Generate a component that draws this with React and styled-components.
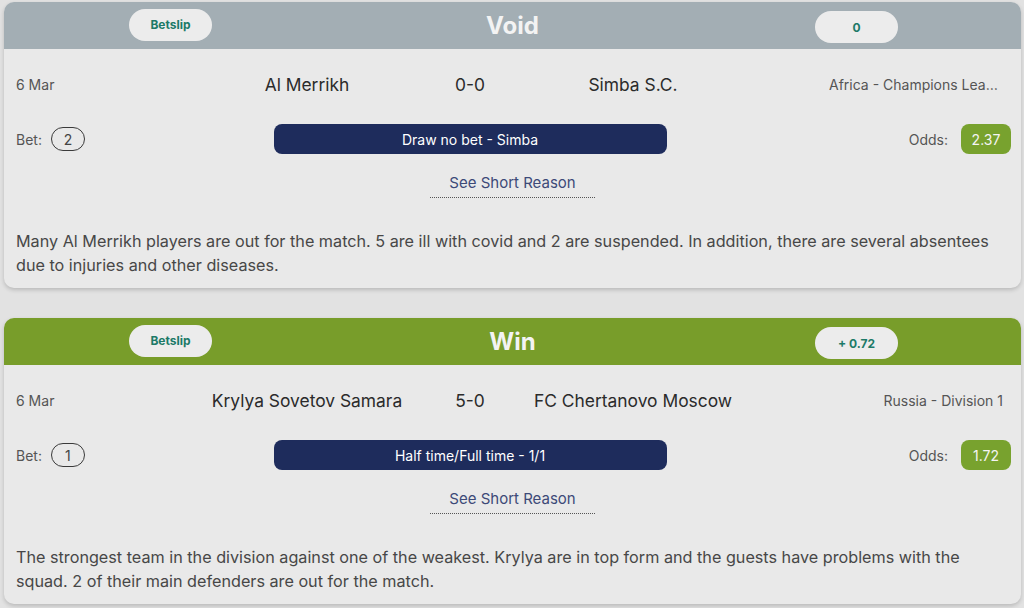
import React from "react";
import styled, { createGlobalStyle } from "styled-components";

const GlobalStyle = createGlobalStyle`
  * { box-sizing: border-box; }
  body {
    margin: 0;
    background: #e2e2e2;
    font-family: Inter, "Liberation Sans", sans-serif;
  }
`;

const Page = styled.div`
  display: flex;
  flex-direction: column;
  gap: 30px;
  padding: 2px 3px 4px 4px;
`;

const Card = styled.section`
  background: #e9e9e9;
  border-radius: 10px;
  overflow: hidden;
  box-shadow: 0 2px 4px rgba(0, 0, 0, 0.18);
`;

const Header = styled.header`
  height: 47px;
  background: ${(p) => (p.$win ? "#789d2a" : "#a3aeb4")};
  display: grid;
  grid-template-columns: 1fr 1fr 1fr;
  align-items: center;
  justify-items: center;
`;

const Pill = styled.span`
  width: 83px;
  height: 32px;
  border-radius: 16px;
  background: #ececec;
  color: #1c7a68;
  font-size: 12px;
  font-weight: 700;
  display: flex;
  align-items: center;
  justify-content: center;
  margin-top: ${(p) => (p.$right ? "3px" : "-2px")};
  transform: translateX(${(p) => (p.$right ? "5px" : "-3px")});
`;

const Title = styled.h2`
  margin: 0;
  color: #f3f3f3;
  font-size: 24px;
  font-weight: 700;
`;

const Body = styled.div`
  padding: 25px 12px 11px;
`;

const Grid = styled.div`
  display: grid;
  grid-template-columns: 178px 226px 100px 226px 1fr;
  align-items: center;
  margin-bottom: ${(p) => p.$mb || "0"};
`;

const Muted = styled.span`
  color: #555;
  font-size: 14px;
`;

const Team = styled.span`
  color: #2b2b2b;
  font-size: 17.4px;
  text-align: center;
  white-space: nowrap;
`;

const League = styled.span`
  justify-self: end;
  max-width: 174px;
  margin-right: 6px;
  color: #555;
  font-size: 14px;
  white-space: nowrap;
  overflow: hidden;
  text-overflow: ellipsis;
`;

const BetBox = styled.div`
  display: flex;
  align-items: center;
  gap: 9px;
`;

const BetCount = styled.span`
  width: 34px;
  height: 24px;
  border: 1.5px solid #3a3a3a;
  border-radius: 12px;
  display: flex;
  align-items: center;
  justify-content: center;
  color: #444;
  font-size: 14px;
`;

const Market = styled.div`
  grid-column: 2 / 5;
  justify-self: center;
  width: 393px;
  height: 30px;
  border-radius: 8px;
  background: #1e2c5c;
  color: #fff;
  font-size: 14px;
  display: flex;
  align-items: center;
  justify-content: center;
`;

const OddsBox = styled.div`
  justify-self: end;
  display: flex;
  align-items: center;
  gap: 13px;
  margin-right: -2px;
`;

const OddsValue = styled.span`
  width: 50px;
  height: 30px;
  border-radius: 8px;
  background: #78a22e;
  color: #f4f4f4;
  font-size: 14px;
  display: flex;
  align-items: center;
  justify-content: center;
`;

const LinkRow = styled.div`
  display: flex;
  justify-content: center;
  margin: 19px 0 31px;
`;

const ReasonLink = styled.a`
  padding: 0 19px 4px;
  border-bottom: 1px dotted #555;
  color: #3d4a78;
  font-size: 15px;
  line-height: 20px;
  text-decoration: none;
`;

const Reason = styled.p`
  margin: 0;
  padding-right: 17px;
  color: #474747;
  font-size: 16.2px;
  line-height: 24px;
`;

const bets = [
  {
    status: "Void",
    win: false,
    profit: "0",
    date: "6 Mar",
    home: "Al Merrikh",
    score: "0-0",
    away: "Simba S.C.",
    league: "Africa - Champions League",
    count: 2,
    market: "Draw no bet - Simba",
    odds: "2.37",
    reason:
      "Many Al Merrikh players are out for the match. 5 are ill with covid and 2 are suspended. In addition, there are several absentees due to injuries and other diseases.",
  },
  {
    status: "Win",
    win: true,
    profit: "+ 0.72",
    date: "6 Mar",
    home: "Krylya Sovetov Samara",
    score: "5-0",
    away: "FC Chertanovo Moscow",
    league: "Russia - Division 1",
    count: 1,
    market: "Half time/Full time - 1/1",
    odds: "1.72",
    reason:
      "The strongest team in the division against one of the weakest. Krylya are in top form and the guests have problems with the squad. 2 of their main defenders are out for the match.",
  },
];

const BetCard = ({ bet }) => (
  <Card>
    <Header $win={bet.win}>
      <Pill>Betslip</Pill>
      <Title>{bet.status}</Title>
      <Pill $right>{bet.profit}</Pill>
    </Header>
    <Body>
      <Grid $mb="29px">
        <Muted>{bet.date}</Muted>
        <Team>{bet.home}</Team>
        <Team>{bet.score}</Team>
        <Team>{bet.away}</Team>
        <League>{bet.league}</League>
      </Grid>
      <Grid>
        <BetBox>
          <Muted>Bet:</Muted>
          <BetCount>{bet.count}</BetCount>
        </BetBox>
        <Market>{bet.market}</Market>
        <OddsBox>
          <Muted>Odds:</Muted>
          <OddsValue>{bet.odds}</OddsValue>
        </OddsBox>
      </Grid>
      <LinkRow>
        <ReasonLink href="#">See Short Reason</ReasonLink>
      </LinkRow>
      <Reason>{bet.reason}</Reason>
    </Body>
  </Card>
);

export default function App() {
  return (
    <Page>
      <GlobalStyle />
      {bets.map((b) => (
        <BetCard key={b.status} bet={b} />
      ))}
    </Page>
  );
}
